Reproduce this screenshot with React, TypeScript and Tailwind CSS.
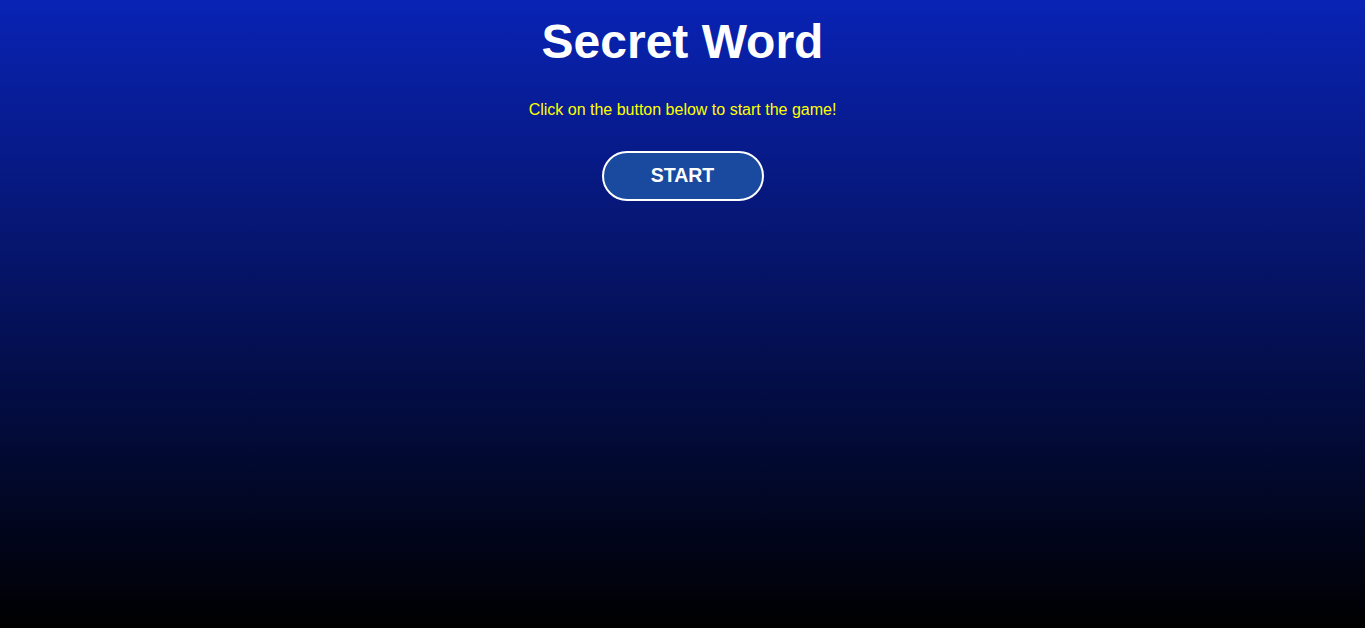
export default function App() {
  return (
    <div
      className="min-h-screen w-full bg-linear-to-b/srgb from-[#0923b5] to-[#000000] flex flex-col items-center text-center"
      style={{ fontFamily: '"Liberation Sans", Arial, sans-serif' }}
    >
      <h1 className="mt-[14px] text-[48px] leading-[55px] font-bold text-white">Secret Word</h1>
      <p className="mt-[32px] text-[16px] leading-[18px] text-[#ffff00]">
        Click on the button below to start the game!
      </p>
      <button className="mt-[32px] w-[162px] h-[50px] rounded-full border-2 border-white bg-[#1a4aa0] text-white font-bold text-[19.5px]">
        START
      </button>
    </div>
  );
}
